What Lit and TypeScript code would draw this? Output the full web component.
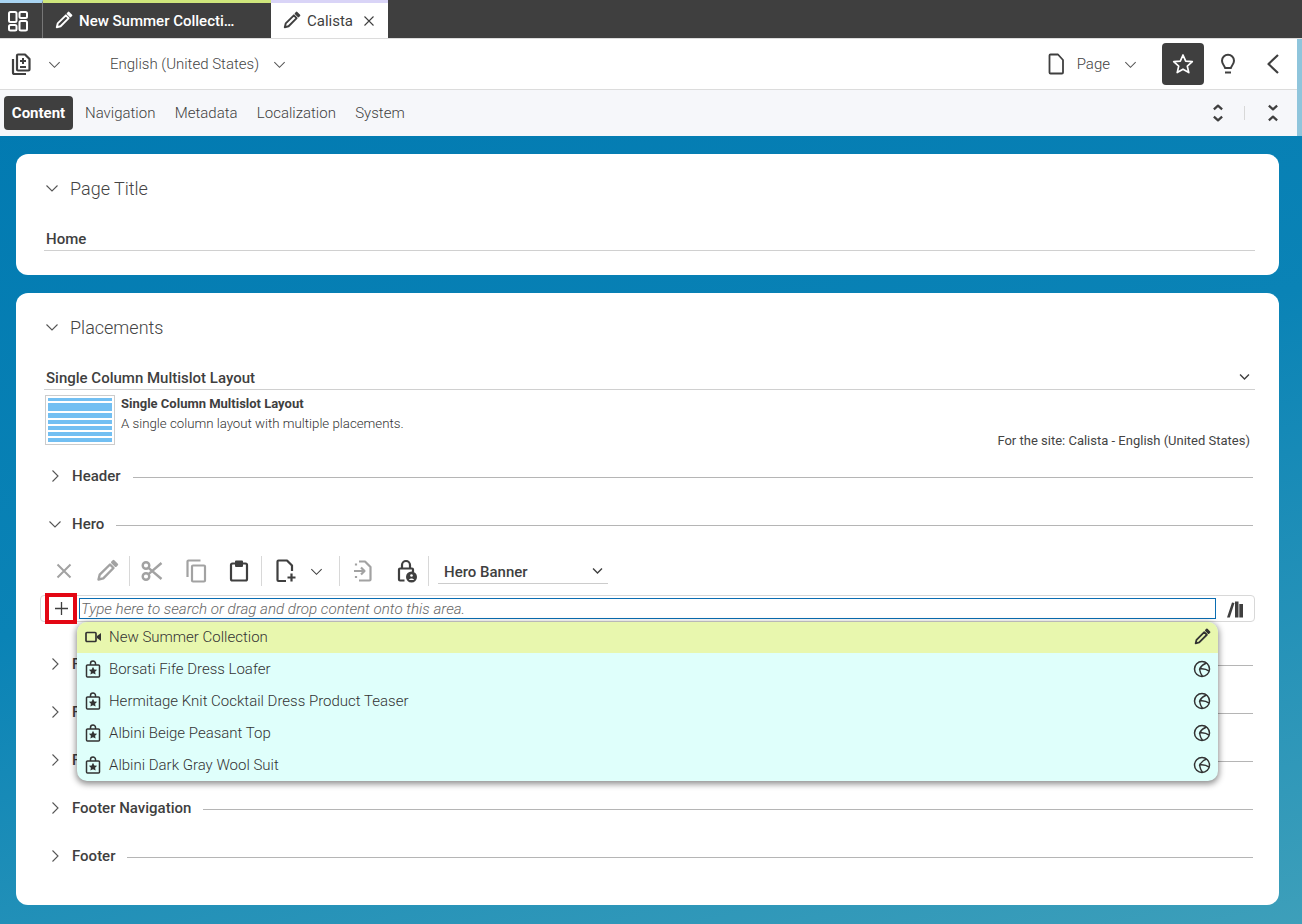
import { LitElement, html, css, svg } from "lit";
import { customElement } from "lit/decorators.js";

const ic = (body: unknown, size = 24) =>
  html`<svg class="ic" width=${size} height=${size} viewBox="0 0 24 24" fill="none" stroke="currentColor" stroke-width="2" stroke-linejoin="round">${body}</svg>`;

const pencil = (size = 24) => html`<svg class="ic" width=${size} height=${size} viewBox="0 0 24 24" fill="none" stroke="currentColor" stroke-width="2.400" stroke-linejoin="round"><path d="M3.500 20.500l1.200-4.800L15 5.500 18.500 9 8.300 19.300z"/><path d="M17.200 3.300l1.300-1.300 3.500 3.500-1.300 1.300z" fill="currentColor"/></svg>`;
const chev = (size = 16) => html`<svg class="ic" width=${size} height=${size} viewBox="0 0 16 16" fill="none" stroke="currentColor" stroke-width="1.100"><path d="M2.500 5.500L8 11l5.500-5.500"/></svg>`;
const chevB = html`<svg class="ic up" width="13" height="13" viewBox="0 0 16 16" fill="none" stroke="currentColor" stroke-width="1.700"><path d="M2.500 5.500L8 11l5.500-5.500"/></svg>`;
const chevR = html`<svg class="ic" width="16" height="16" viewBox="0 0 16 16" fill="none" stroke="currentColor" stroke-width="1.100"><path d="M5.500 2.500L11 8l-5.500 5.500"/></svg>`;
const globe = html`<svg class="ic" width="18" height="18" viewBox="0 0 18 18" fill="none" stroke="currentColor" stroke-width="1.500"><circle cx="9" cy="9" r="7.500"/><path d="M6.500 9C8 6.500 10.500 4 13.500 3M6.500 9c3-.5 7 .3 9.700 2.200M6.500 9c.5 3 1.500 5.500 3 7.500"/></svg>`;
const bag = html`<svg class="ic" width="16" height="18" viewBox="0 0 16 18" fill="none"><path d="M2.500 5h11a1 1 0 0 1 1 1v10a1 1 0 0 1-1 1h-11a1 1 0 0 1-1-1V6a1 1 0 0 1 1-1zM5.500 5V3.500a2.500 2.500 0 0 1 5 0V5" stroke="currentColor" stroke-width="1.500"/><path d="M8 6.800l1.300 2.600 2.800.4-2 2 .5 2.800L8 13.300l-2.600 1.300.5-2.800-2-2 2.800-.4z" fill="currentColor"/></svg>`;

const hiddenRows = ["F", "F", "F"];
const items = ["Borsati Fife Dress Loafer", "Hermitage Knit Cocktail Dress Product Teaser", "Albini Beige Peasant Top", "Albini Dark Gray Wool Suit"];

@customElement("app-root")
export class AppRoot extends LitElement {
  static styles = css`
    :host { display: block; width: 1302px; height: 924px; overflow: hidden; position: relative; font-family: Roboto, "Liberation Sans", sans-serif; color: #3f3f3f; background: linear-gradient(165deg, #0078b0 0%, #0a83b6 50%, #3d9fba 100%); }
    * { box-sizing: border-box; }
    .ic { display: block; flex: none; }
    .up { margin-top: -3px; }
    .tabs { height: 39px; background: #3f3f3f; display: flex; border-bottom: 1px solid #dcdcdc; color: #fff; }
    .tab { height: 38px; display: flex; align-items: center; border-top: 3px solid transparent; }
    .t0 { width: 43px; border-top-color: #a9d4f2; border-right: 1px solid #777; justify-content: center; padding-right: 6px; }
    .t1 { width: 228px; border-top-color: #cfe67c; padding-left: 11px; gap: 6px; font-size: 15px; font-weight: 500; }
    .t2 { width: 117px; border-top-color: #d9d4f7; background: #fff; color: #3f3f3f; padding-left: 11px; gap: 6px; font-size: 15px; }
    .t2 .x { margin-left: 4px; }
    .head { width: 1302px; background: #8fc5dc; }
    .bar { width: 1297px; height: 51px; background: #fff; border-bottom: 1px solid #dcdcdc; display: flex; align-items: center; }
    .lang { display: flex; align-items: center; margin-left: 48px; gap: 13px; font-size: 15px; font-weight: 300; color: #444; }
    .add { margin-left: 10px; margin-right: 13px; }
    .g { color: #555; }
    .spacer { flex: 1; }
    .page { display: flex; align-items: center; font-size: 15px; font-weight: 300; }
    .page span { margin: 0 13px 0 9px; }
    .star { width: 42px; height: 42px; border-radius: 4px; background: #3f3f3f; color: #fff; display: grid; place-items: center; margin-left: 24px; }
    .bulb { margin: 0 0 0 12px; }
    .back { margin: 0 12px 0 21px; }
    .nav { width: 1297px; height: 46px; background: #f6f7fa; display: flex; align-items: center; padding-left: 4px; font-size: 15px; font-weight: 300; }
    .nav .on { background: #3f3f3f; color: #fff; font-weight: 700; border-radius: 4px; width: 69px; height: 34px; display: grid; place-items: center; margin-right: 12px; }
    .nav .it { margin-right: 19.300px; }
    .nav .sep { width: 1px; height: 14px; background: #d8d8d8; margin: 0 17px 0 15px; }
    .nav .last { margin-right: 13px; }
    .card { background: #fff; border-radius: 12px; margin: 0 23px 18px 16px; padding: 0 24px 0 28px; }
    .c1 { margin-top: 18px; height: 121px; }
    .c2 { height: 612px; position: relative; }
    .title { height: 68px; display: flex; align-items: center; gap: 10px; font-size: 18px; font-weight: 300; color: #444; }
    .title .ic { color: #555; }
    .fld { height: 26px; margin-top: 3px; border-bottom: 1px solid #d0d0d0; display: flex; align-items: center; justify-content: space-between; font-size: 15px; font-weight: 500; padding: 3px 2px 0; }
    .c2 .fld { height: 27px; margin-top: 2px; padding-top: 4px; }
    .c2 .fld .ic { margin-right: 2px; }
    .desc { display: flex; gap: 6px; padding: 5px 0 0 1px; height: 75px; position: relative; }
    .thumb { width: 70px; height: 50px; border: 1px solid #ccc; padding: 2px; display: grid; grid-template-rows: 3px 8px 5px 4px 4px 4px 4px; gap: 2px; }
    .thumb i { background: #72bff2; }
    .d1 { font-size: 13px; font-weight: 700; margin-top: 2px; line-height: 14px; }
    .d2 { font-size: 13.250px; font-weight: 300; margin-top: 5px; line-height: 15px; color: #333; }
    .site { position: absolute; right: 5px; top: 43px; font-size: 13px; color: #444; }
    .row { height: 48px; display: flex; align-items: center; font-size: 15px; font-weight: 500; padding-left: 3px; gap: 9px; }
    .row .ic { color: #555; }
    .row hr { flex: 1; margin: 2px 2px 0 3px; border: 0; border-top: 1px solid #b5b5b5; }
    .row.first { margin-top: -13px; }
    .act { display: flex; align-items: center; height: 32px; margin: 7px 0 0 -2px; color: #3f3f3f; }
    .act .b { width: 43px; display: grid; place-items: center; flex: none; }
    .act .off { color: #a2a2a2; }
    .act .sep { width: 1px; height: 30px; background: #d8d8d8; flex: none; margin-left: 1px; }
    .act .w44 { width: 44px; }
    .act .w46 { width: 46px; }
    .act .dd { width: 16px; margin-right: 14px; }
    .act .w45 { width: 45px; }
    .act .w41 { width: 41px; margin-right: 1px; }
    .sel { width: 170px; margin: 1px 0 0 9px; height: 25px; border-bottom: 1px solid #ccc; display: flex; align-items: center; justify-content: space-between; font-size: 15px; font-weight: 500; padding: 2px 4px 0 6px; }
    .search { height: 27px; margin: 8px 0 0 -4px; border: 1px solid #d8d8d8; border-radius: 4px; display: flex; align-items: center; padding-left: 38px; }
    .input { width: 1137px; height: 21px; border: 1px solid #0a6db2; font-size: 15.150px; font-style: italic; font-weight: 300; color: #666; display: flex; align-items: center; padding-left: 1px; }
    .lib { margin-left: 10px; }
    .redbox { position: absolute; left: 29px; top: 300px; width: 32px; height: 31px; border: 4px solid #e30613; display: grid; place-items: center; z-index: 2; }
    .pop { position: absolute; left: 61px; top: 329px; width: 1141px; border-radius: 10px; box-shadow: 0 2px 6px 1px rgba(0,0,0,.45); overflow: hidden; background: #dffffb; font-size: 15px; font-weight: 300; }
    .p { height: 32px; display: flex; align-items: center; padding: 0 7px 0 8px; color: #333; }
    .p .n { flex: 1; margin-left: 8px; }
    .p.g1 { background: #e8f7ae; height: 31px; padding-bottom: 2px; }
    .after { margin-top: 18px; }
  `;

  render() {
    return html`
      <div class="tabs">
        <div class="tab t0">${ic(svg`<rect x="3" y="3" width="7.500" height="10" rx="1.500"/><rect x="13.500" y="3" width="7.500" height="6" rx="1.500"/><rect x="3" y="16" width="7.500" height="5.500" rx="1.500"/><rect x="13.500" y="12" width="7.500" height="9.500" rx="1.500"/>`, 24)}</div>
        <div class="tab t1">${pencil(19)}<span>New Summer Collecti…</span></div>
        <div class="tab t2">${pencil(19)}<span>Calista</span><svg class="ic x" width="12" height="12" viewBox="0 0 12 12" stroke="currentColor" stroke-width="1.100"><path d="M1.500 1.500l9 9M10.500 1.500l-9 9"/></svg></div>
      </div>
      <div class="head">
      <div class="bar">
        <div class="add">${ic(svg`<path d="M8 2.500h7l4.500 4.500v10.500a1 1 0 0 1-1 1H8a1 1 0 0 1-1-1v-14a1 1 0 0 1 1-1z" stroke-width="2.200"/><path d="M3 7v13.500a1.500 1.500 0 0 0 1.500 1.500H16" stroke-width="2.200"/><path d="M13 6v6M10 9h6M10 15h6" stroke-width="2"/>`, 24)}</div>
        <span class="g">${chev(15)}</span>
        <div class="lang"><span>English (United States)</span><span class="g">${chev(15)}</span></div>
        <div class="spacer"></div>
        <div class="page">${ic(svg`<path d="M6.500 2.500h7.500l5 5.500v12.500a1 1 0 0 1-1 1h-11.500a1 1 0 0 1-1-1V3.500a1 1 0 0 1 1-1z" stroke-width="1.800"/>`, 24)}<span>Page</span><span class="g" style="margin:0">${chev(15)}</span></div>
        <div class="star">${ic(svg`<path d="M12 3l2.700 6.100 6.600.6-5 4.400 1.500 6.500L12 17.200l-5.800 3.400 1.500-6.500-5-4.400 6.600-.6z" stroke-width="1.700"/>`, 24)}</div>
        <div class="bulb">${ic(svg`<path d="M9 16c0-2-3-3.500-3-7.200a6 6 0 0 1 12 0C18 12.500 15 14 15 16z"/><path d="M9 20.500h6"/>`, 24)}</div>
        <div class="back">${ic(svg`<path d="M17 3L7.500 12 17 21" stroke-width="2.200"/>`, 24)}</div>
      </div>
      <div class="nav">
        <div class="on">Content</div>
        <span class="it">Navigation</span><span class="it">Metadata</span><span class="it">Localization</span><span>System</span>
        <div class="spacer"></div>
        ${ic(svg`<path d="M7.500 8l4.500-4 4.500 4M7.500 16l4.500 4 4.500-4" stroke-width="2.500"/>`, 22)}
        <div class="sep"></div>
        <div class="last">${ic(svg`<path d="M7.500 4l4.500 4 4.500-4M7.500 20l4.500-4 4.500 4" stroke-width="2.500"/>`, 22)}</div>
      </div>
      </div>
      <div class="card c1">
        <div class="title">${chev()}<span>Page Title</span></div>
        <div class="fld">Home</div>
      </div>
      <div class="card c2">
        <div class="title">${chev()}<span>Placements</span></div>
        <div class="fld"><span>Single Column Multislot Layout</span>${chevB}</div>
        <div class="desc">
          <div class="thumb"><i></i><i></i><i></i><i></i><i></i><i></i><i></i></div>
          <div><div class="d1">Single Column Multislot Layout</div><div class="d2">A single column layout with multiple placements.</div></div>
          <div class="site">For the site: Calista - English (United States)</div>
        </div>
        <div class="row first">${chevR}<span>Header</span><hr /></div>
        <div class="row">${chev()}<span>Hero</span><hr /></div>
        <div class="act">
          <div class="b off">${ic(svg`<path d="M5.500 5.500l13 13M18.500 5.500l-13 13" stroke-width="2"/>`)}</div>
          <div class="b off">${pencil(24)}</div>
          <div class="sep"></div>
          <div class="b off w44">${ic(svg`<circle cx="6" cy="6.500" r="3.300" stroke-width="2.400"/><circle cx="6" cy="17.500" r="3.300" stroke-width="2.400"/><path d="M8.500 8.800L21.500 20M8.500 15.200L21.500 4" stroke-width="2.400"/>`)}</div>
          <div class="b off">${ic(svg`<rect x="8" y="6.500" width="13" height="16" rx="1" stroke-width="2.200"/><path d="M16.500 1.500H4.500a1 1 0 0 0-1 1V18" stroke-width="2.200"/>`)}</div>
          <div class="b">${ic(svg`<rect x="4" y="4.500" width="16" height="17" rx="1.500" stroke-width="2.200"/><path d="M9 2.500h6v4.500H9z" fill="currentColor"/>`)}</div>
          <div class="sep"></div>
          <div class="b w46">${ic(svg`<path d="M13 22H5.500a1 1 0 0 1-1-1V2.500a1 1 0 0 1 1-1h8.500l5 5V12" stroke-width="2.200"/><path d="M18.500 14.500v8M14.500 18.500h8" stroke-width="2.200"/>`)}</div>
          <div class="b dd">${chev(15)}</div>
          <div class="sep"></div>
          <div class="b off w45">${ic(svg`<path d="M8 2.500h6l5.500 5.500v12.500a1 1 0 0 1-1 1H8M5 4.500v2M5 17v2M3 12h10M10 8.500l3.500 3.500-3.500 3.500" stroke-width="2.200"/>`)}</div>
          <div class="b w41">${ic(svg`<path d="M8 9.500V6a4 4 0 0 1 8 0v3.500M10.500 21.500H6a1 1 0 0 1-1-1V10.500a1 1 0 0 1 1-1h12a1 1 0 0 1 1 1V13" stroke-width="2.200"/><circle cx="17.500" cy="18" r="5.500" fill="currentColor" stroke="none"/><circle cx="17.500" cy="16.500" r="1.300" fill="#fff" stroke="none"/><path d="M15 21c.5-2 4.500-2 5 0z" fill="#fff" stroke="none"/>`)}</div>
          <div class="sep"></div>
          <div class="sel"><span>Hero Banner</span>${chevB}</div>
        </div>
        <div class="search">
          <div class="input">Type here to search or drag and drop content onto this area.</div>
          <div class="lib"><svg class="ic" width="18" height="18" viewBox="0 0 18 18" fill="currentColor"><path d="M1 17.500L6 2.500l2.500.5L3.800 17.500zM9 1.500h3.500v16H9zM13.300 4H17v13.500h-3.700z"/></svg></div>
        </div>
        <div class="after">
          ${hiddenRows.map((r) => html`<div class="row">${chevR}<span>${r}</span><hr /></div>`)}
          <div class="row">${chevR}<span>Footer Navigation</span><hr /></div>
          <div class="row">${chevR}<span>Footer</span><hr /></div>
        </div>
        <div class="redbox"><svg class="ic" width="13" height="13" viewBox="0 0 13 13" stroke="#3f3f3f" stroke-width="1.300"><path d="M6.500 0v13M0 6.500h13"/></svg></div>
        <div class="pop">
          <div class="p g1"><svg class="ic" width="16" height="12" viewBox="0 0 16 12" fill="none"><rect x="1" y="1.500" width="10" height="9" rx="1" stroke="currentColor" stroke-width="1.700"/><path d="M12 5l4-3v8l-4-3z" fill="currentColor"/></svg><span class="n">New Summer Collection</span>${pencil(18)}</div>
          ${items.map((t) => html`<div class="p">${bag}<span class="n">${t}</span>${globe}</div>`)}
        </div>
      </div>
    `;
  }
}
